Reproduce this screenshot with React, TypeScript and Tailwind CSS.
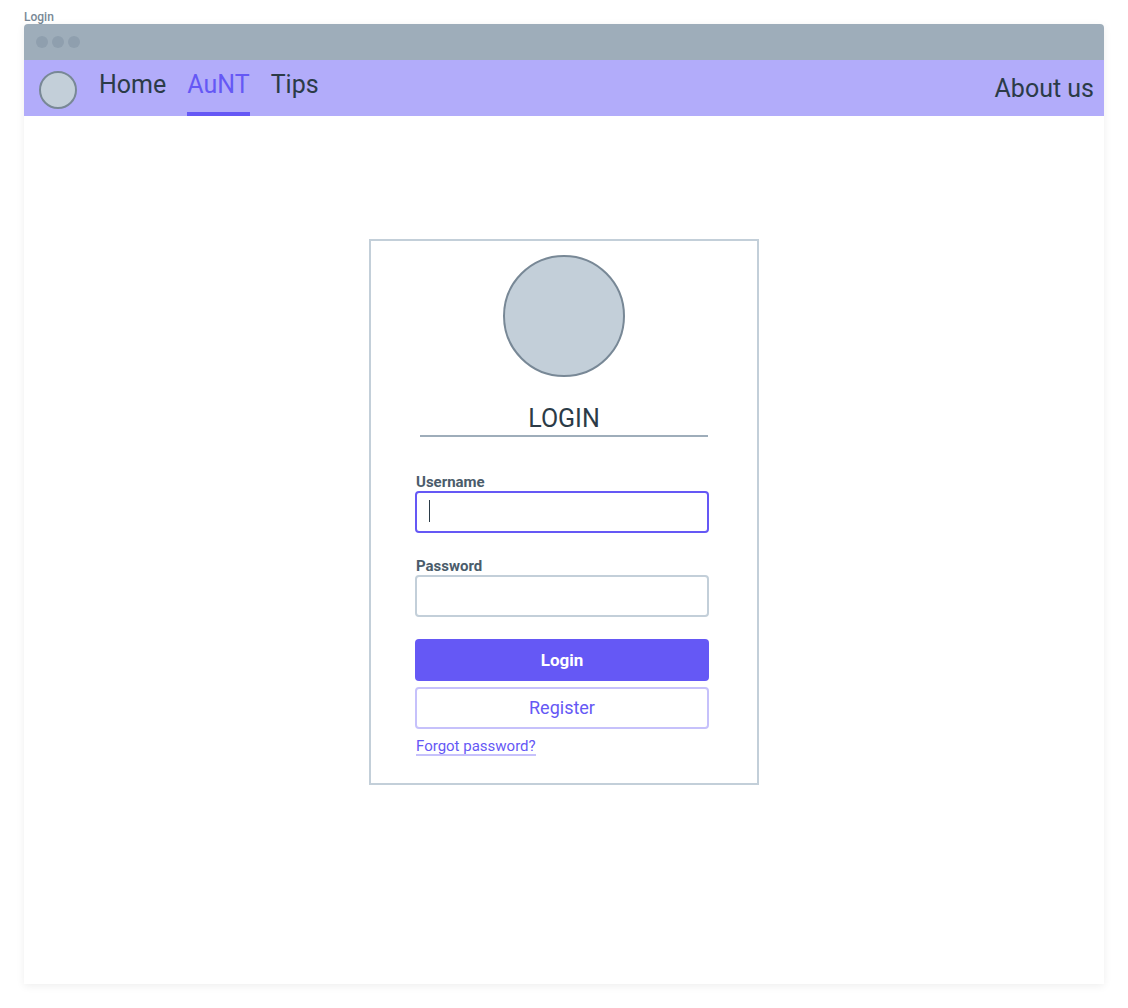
const navItems = [
  { label: "Home", active: false },
  { label: "AuNT", active: true },
  { label: "Tips", active: false },
];

function NavBar() {
  return (
    <nav className="flex h-14 items-center bg-[#b2acfa] pr-2.5 pl-[15px] text-[25px] text-[#2b3b47]">
      <span className="mt-1 size-[38px] shrink-0 rounded-full border-2 border-[#788896] bg-[#c3cfd9]" />
      <div className="ml-[22px] flex h-full gap-[21px]">
        {navItems.map((item) => (
          <a
            key={item.label}
            href="#"
            aria-current={item.active ? "page" : undefined}
            className={
              item.active
                ? "flex items-center border-b-4 border-[#6558f5] pb-0.5 text-[#6558f5]"
                : "flex items-center border-b-4 border-transparent pb-0.5"
            }
          >
            {item.label}
          </a>
        ))}
      </div>
      <a href="#" className="ml-auto pt-0.5 whitespace-nowrap">
        About us
      </a>
    </nav>
  );
}

function LoginCard() {
  return (
    <section className="w-full max-w-[390px] border-2 border-[#c3cfd9] pt-3.5 pb-[27px]">
      <div className="mx-auto size-[122px] rounded-full border-2 border-[#788896] bg-[#c3cfd9]" />
      <h1 className="mx-[49px] mt-[26px] border-b-2 border-[#9eadba] text-center text-[25px] leading-8 text-[#2b3b47]">
        LOGIN
      </h1>
      <form
        className="mt-9 flex flex-col pr-12 pl-11"
        onSubmit={(e) => e.preventDefault()}
      >
        <label htmlFor="username" className="pl-px text-[15px] leading-[18px] font-bold text-[#4b5c6b]">
          Username
        </label>
        <div className="relative">
          <input
            id="username"
            type="text"
            className="peer block h-[42px] w-full rounded border-2 border-[#6558f5] px-3 text-[17px] text-[#2b3b47] outline-none"
          />
          <span className="pointer-events-none absolute top-[9px] left-3.5 h-[22px] w-px bg-[#2b3b47] peer-focus:hidden" />
        </div>
        <label
          htmlFor="password"
          className="mt-6 pl-px text-[15px] leading-[18px] font-bold text-[#4b5c6b]"
        >
          Password
        </label>
        <input
          id="password"
          type="password"
          className="block h-[42px] w-full rounded border-2 border-[#c3cfd9] px-3 text-[17px] text-[#2b3b47] outline-none"
        />
        <button
          type="submit"
          className="mt-[22px] h-[42px] rounded bg-[#6558f5] pt-0.5 text-[17px] font-bold text-white"
        >
          Login
        </button>
        <button
          type="button"
          className="mt-1.5 h-[42px] rounded border-2 border-[#c6c1fb] pb-0.5 text-[18px] text-[#6558f5]"
        >
          Register
        </button>
        <a
          href="#"
          className="mt-[9px] ml-px self-start border-b-2 border-[#c6c1fb] text-[15px] leading-4 text-[#6558f5]"
        >
          Forgot password?
        </a>
      </form>
    </section>
  );
}

export default function App() {
  return (
    <div className="flex min-h-screen flex-col bg-white px-6 pt-2.5 pb-6 font-['Roboto',sans-serif]">
      <p className="text-[12px] leading-[14px] font-medium text-[#788896]">Login</p>
      <div className="flex flex-1 flex-col rounded-t bg-white shadow-[0_2px_8px_rgba(0,0,0,0.07)]">
        <div className="flex h-9 items-center gap-1 rounded-t bg-[#9eadba] px-3">
          <span className="size-3 rounded-full bg-[#8f9fae]" />
          <span className="size-3 rounded-full bg-[#8f9fae]" />
          <span className="size-3 rounded-full bg-[#8f9fae]" />
        </div>
        <NavBar />
        <main className="flex justify-center px-4 pt-[123px] pb-12">
          <LoginCard />
        </main>
      </div>
    </div>
  );
}
